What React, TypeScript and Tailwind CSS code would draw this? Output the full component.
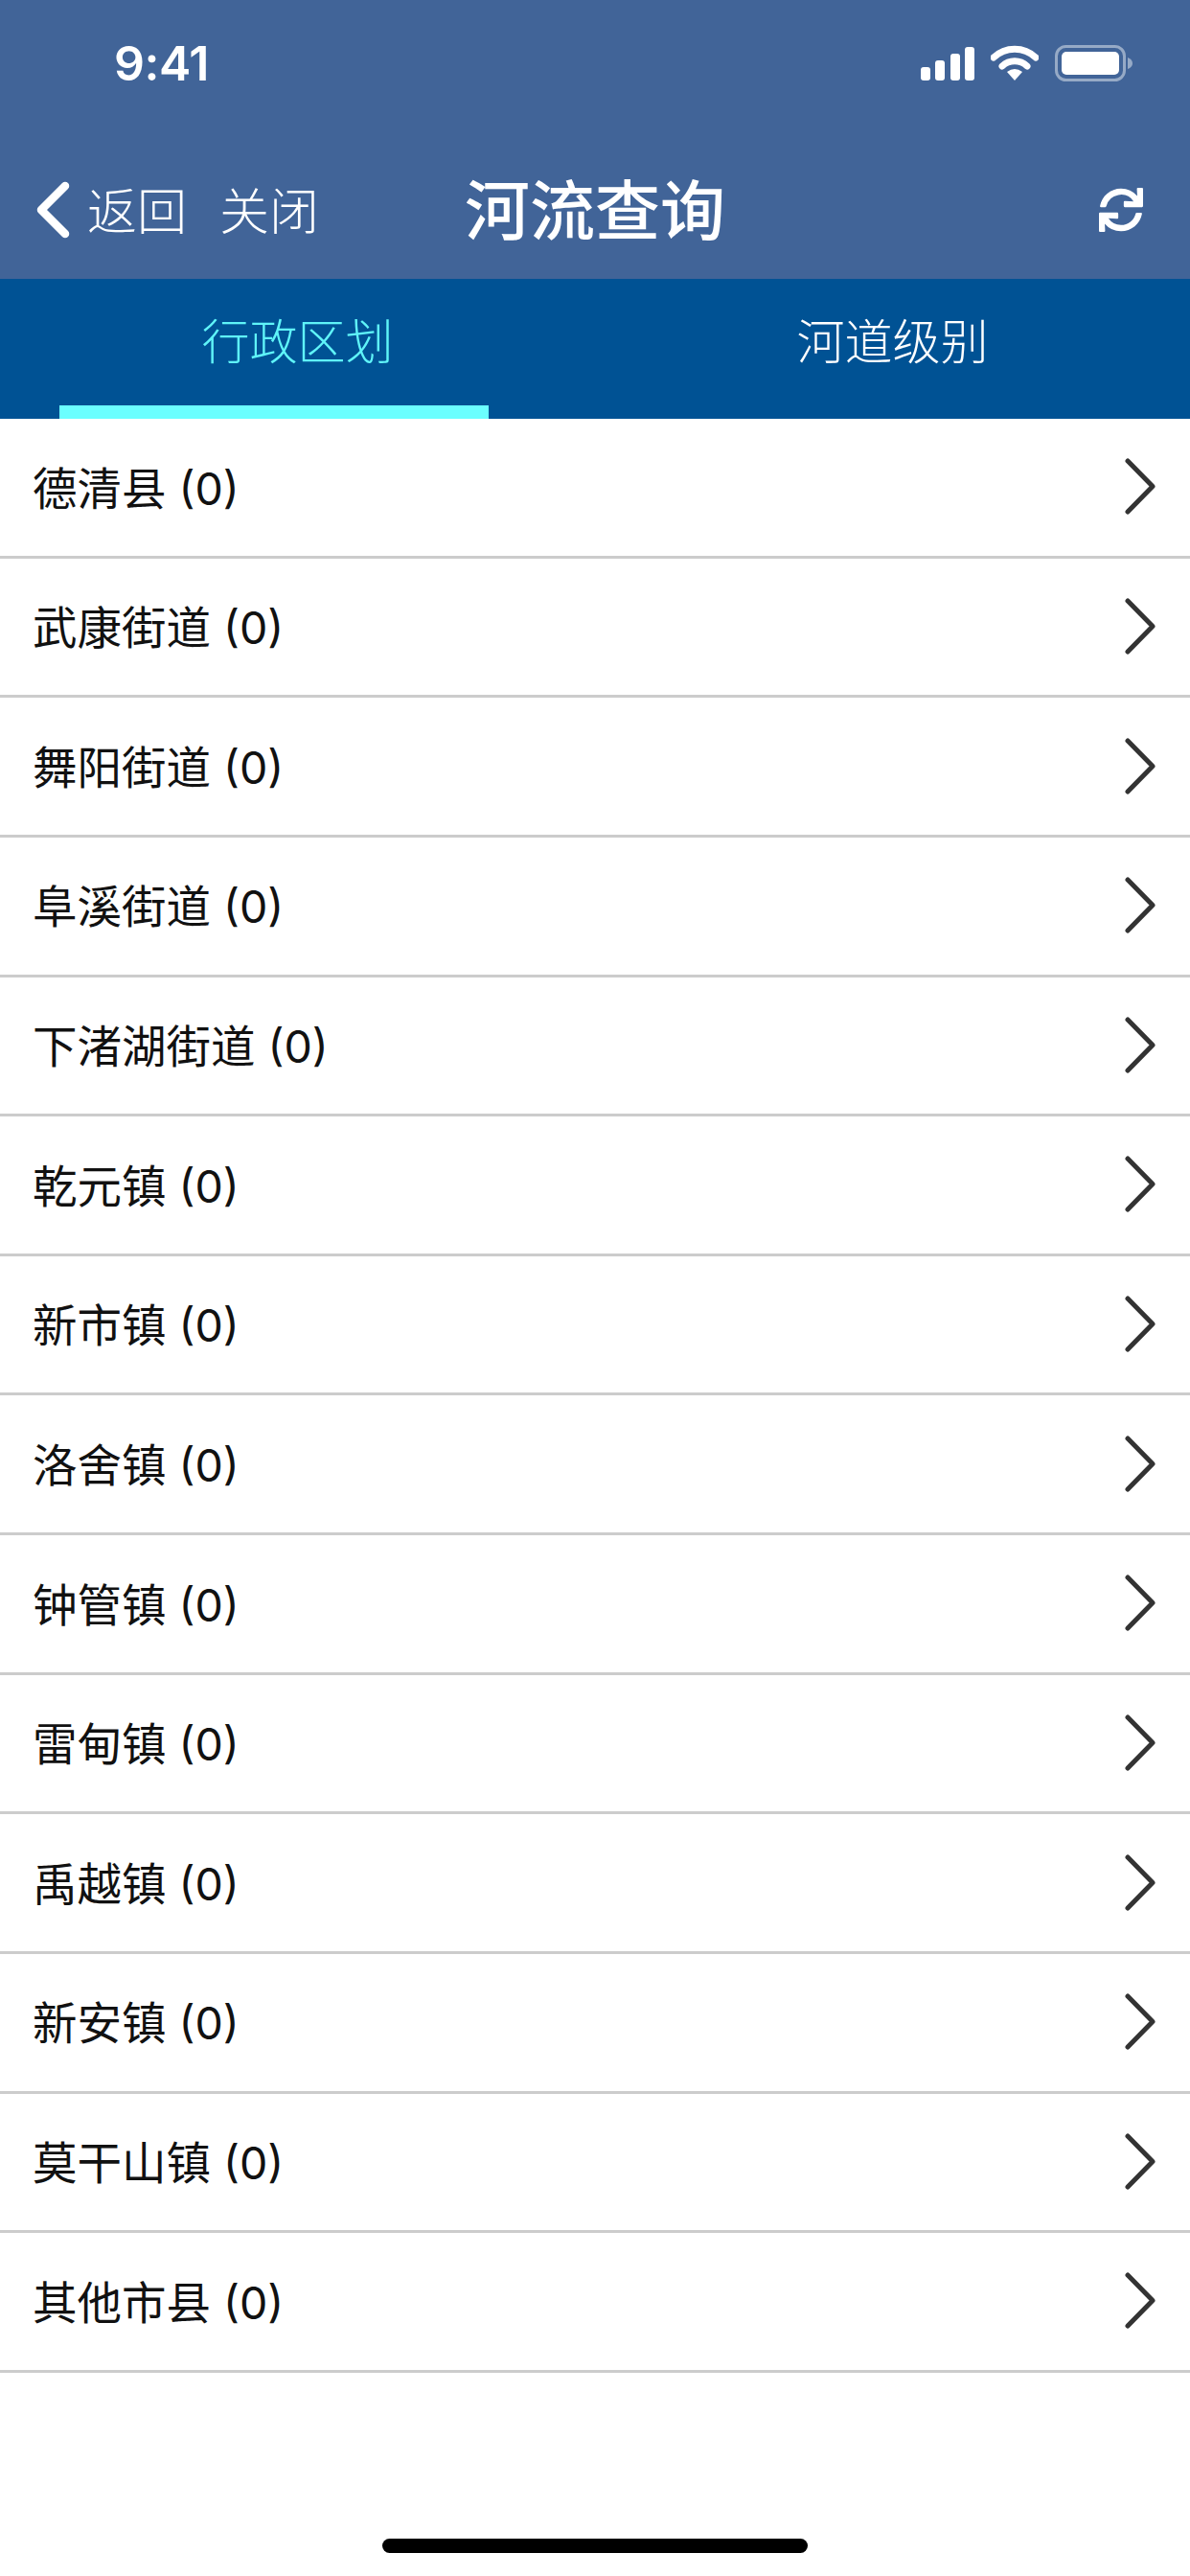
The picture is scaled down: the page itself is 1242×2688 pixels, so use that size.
import { FaSync } from "react-icons/fa";

const rows = ["德清县","武康街道","舞阳街道","阜溪街道","下渚湖街道","乾元镇","新市镇","洛舍镇","钟管镇","雷甸镇","禹越镇","新安镇","莫干山镇","其他市县"];
const cjk = { fontFamily: '"Noto Sans CJK SC", sans-serif' };

export default function App() {
  return (
    <div className="relative w-[1242px] h-[2688px] bg-white overflow-hidden" style={cjk}>
      <header className="h-[291px] bg-[#416498] text-white flex flex-col">
        <div className="h-[147px] flex items-start justify-between pl-[119px] pr-[60px] pt-[47px]">
          <span className="text-[50px] leading-[38px] font-semibold font-['Inter',sans-serif] tracking-[-0.5px]">9:41</span>
          <div className="flex items-center gap-[17px]">
            <svg width="56" height="36" viewBox="0 0 56 36" fill="#fff">
              <rect x="0" y="22" width="10" height="14" rx="3" />
              <rect x="15" y="15" width="10" height="21" rx="3" />
              <rect x="31" y="8" width="10" height="28" rx="3" />
              <rect x="46" y="1" width="10" height="35" rx="3" />
            </svg>
            <svg width="50" height="38" viewBox="0 0 50 38" fill="none">
              <path d="M3 13 A32 32 0 0 1 47 13" stroke="#fff" strokeWidth="7" strokeLinecap="round" />
              <path d="M12 22 A19 19 0 0 1 38 22" stroke="#fff" strokeWidth="7" strokeLinecap="round" />
              <path d="M25 37 L17 28 Q25 22 33 28 Z" fill="#fff" />
            </svg>
            <svg width="81" height="38" viewBox="0 0 81 38" fill="none">
              <rect x="1.5" y="1.5" width="71" height="35" rx="10" stroke="#fff" strokeOpacity="0.45" strokeWidth="3" />
              <rect x="7" y="7" width="60" height="24" rx="5" fill="#fff" />
              <path d="M76 13 Q81 15 81 19 Q81 23 76 25 Z" fill="#fff" fillOpacity="0.45" />
            </svg>
          </div>
        </div>
        <div className="flex-1 grid grid-cols-3 items-center px-[37px]">
          <div className="flex items-center whitespace-nowrap">
            <svg width="36" height="60" viewBox="0 0 36 60" fill="none">
              <path d="M31 5 L6 30 L31 55" stroke="#fff" strokeWidth="8.5" strokeLinecap="round" strokeLinejoin="round" />
            </svg>
            <span className="ml-[18px] pb-[3px] text-[52px] leading-none font-light">返回</span>
            <span className="ml-[34px] pb-[3px] text-[52px] leading-none font-light">关闭</span>
          </div>
          <h1 className="text-center pb-[6px] text-[68px] leading-none font-medium whitespace-nowrap">河流查询</h1>
          <div className="flex justify-end pr-[12px]">
            <FaSync size={46} />
          </div>
        </div>
      </header>
      <nav className="h-[146px] bg-[#005294] flex">
        <div className="flex-1 relative flex items-center justify-center pb-[22px] text-[50px] leading-none font-light text-[#5ff4f8]">
          行政区划
          <span className="absolute left-[62px] bottom-0 w-[448px] h-[14px] bg-[#6bffff]" />
        </div>
        <div className="flex-1 flex items-center justify-center pb-[22px] text-[50px] leading-none font-light text-white">
          河道级别
        </div>
      </nav>
      <ul>
        {rows.map((r) => (
          <li key={r} className="h-[145.64px] flex items-center justify-between pl-[34px] pr-[36px] border-b-[3px] border-[#cccccc] text-[#111111]">
            <span className="pt-[3px] text-[46.5px] leading-none font-normal whitespace-nowrap font-['Inter','Noto_Sans_CJK_SC',sans-serif]">{r} (0)</span>
            <svg width="32" height="60" viewBox="0 0 32 60" fill="none">
              <path d="M3 3 L29 29.5 L3 56" stroke="#333333" strokeWidth="5" strokeLinecap="round" strokeLinejoin="round" />
            </svg>
          </li>
        ))}
      </ul>
      <div className="absolute left-[399px] top-[2649px] w-[444px] h-[15px] rounded-full bg-black" />
    </div>
  );
}
